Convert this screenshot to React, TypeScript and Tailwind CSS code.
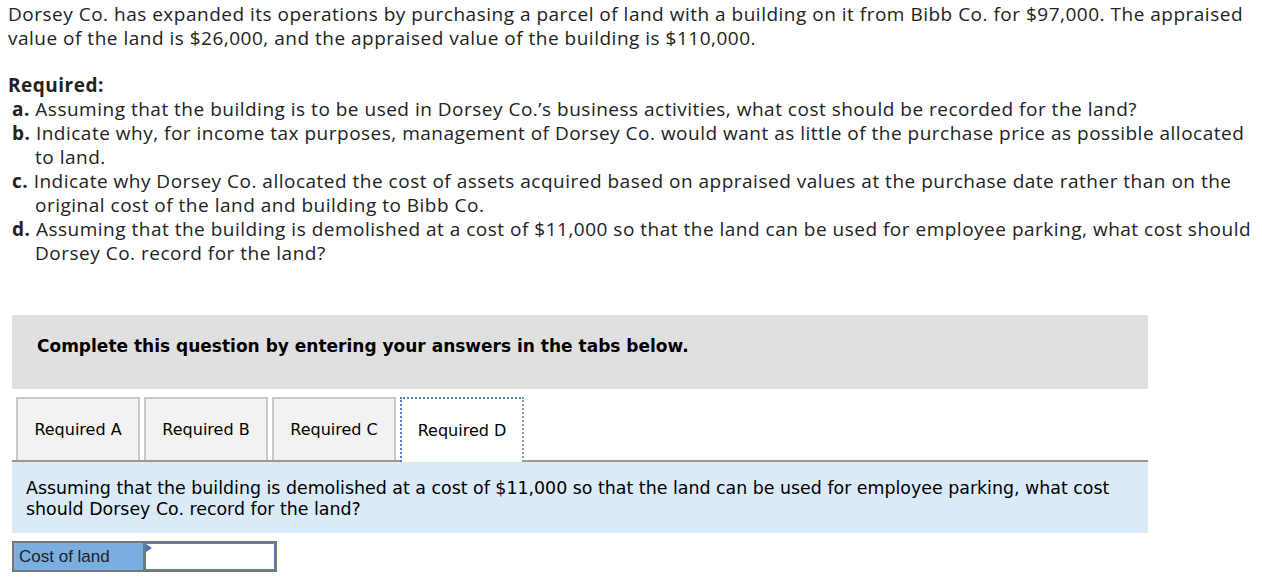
import React from "react";

const parts = [
  {
    key: "a.",
    text: "Assuming that the building is to be used in Dorsey Co.’s business activities, what cost should be recorded for the land?",
  },
  {
    key: "b.",
    text: "Indicate why, for income tax purposes, management of Dorsey Co. would want as little of the purchase price as possible allocated to land.",
  },
  {
    key: "c.",
    text: "Indicate why Dorsey Co. allocated the cost of assets acquired based on appraised values at the purchase date rather than on the original cost of the land and building to Bibb Co.",
  },
  {
    key: "d.",
    text: "Assuming that the building is demolished at a cost of $11,000 so that the land can be used for employee parking, what cost should Dorsey Co. record for the land?",
  },
];

const tabs = ["Required A", "Required B", "Required C", "Required D"];

export default function App() {
  const active = 3;

  return (
    <div className="bg-white w-[1262px] h-[582px] overflow-hidden text-[#222]">
      <div className="pl-2 pr-2 pt-[2px] font-['Open_Sans',sans-serif] text-[19px] tracking-[0.5px] leading-6">
        <p>
          Dorsey Co. has expanded its operations by purchasing a parcel of land with a building on it from Bibb Co.
          for $97,000. The appraised value of the land is $26,000, and the appraised value of the building is
          $110,000.
        </p>
        <p className="mt-[23px] font-bold">Required:</p>
        <ul>
          {parts.map((p) => (
            <li key={p.key} className="pl-[27px] -indent-[23px]">
              <span className="font-bold">{p.key}</span> {p.text}
            </li>
          ))}
        </ul>
      </div>

      <div className="mt-[50px] w-[1136px] ml-3 font-['DejaVu_Sans',Verdana,sans-serif] text-black">
        <div className="bg-[#e0e0e0] h-[74px] pl-[25px] pt-[21px]">
          <p className="font-bold text-[17px] leading-5">
            Complete this question by entering your answers in the tabs below.
          </p>
        </div>

        <div className="mt-2 flex gap-1 pl-1 h-[65px] border-b-2 border-[#999]">
          {tabs.map((t, i) => (
            <div
              key={t}
              className={
                i === active
                  ? "w-[124px] -mb-[2px] bg-white border-2 border-dotted border-[#4a7fc4] border-r-[#999] border-b-0 flex items-center justify-center text-[16px]"
                  : "w-[124px] bg-[#f2f2f2] border-2 border-[#c8c8c8] border-b-0 flex items-center justify-center text-[16px]"
              }
            >
              {t}
            </div>
          ))}
        </div>

        <div className="bg-[#dbeaf8] h-[71px] pl-[14px] pr-6 pt-[16px] text-[17.4px] leading-[21px]">
          Assuming that the building is demolished at a cost of $11,000 so that the land can be used for employee
          parking, what cost should Dorsey Co. record for the land?
        </div>

        <div className="mt-2 flex h-[31px] w-[265px] border-2 border-[#777] font-['Liberation_Sans',Arial,sans-serif]">
          <div className="w-[131px] bg-[#7aaee0] border-r-2 border-[#777] flex items-center pl-[5px] text-[17px] text-[#222]">
            Cost of land
          </div>
          <div className="relative flex-1 bg-white border border-[#4a86c8]">
            <svg className="absolute left-0 top-0" width="6" height="8" viewBox="0 0 6 8">
              <polygon points="0,0 6,4 0,8" fill="#3a78c0" />
            </svg>
          </div>
        </div>
      </div>
    </div>
  );
}
